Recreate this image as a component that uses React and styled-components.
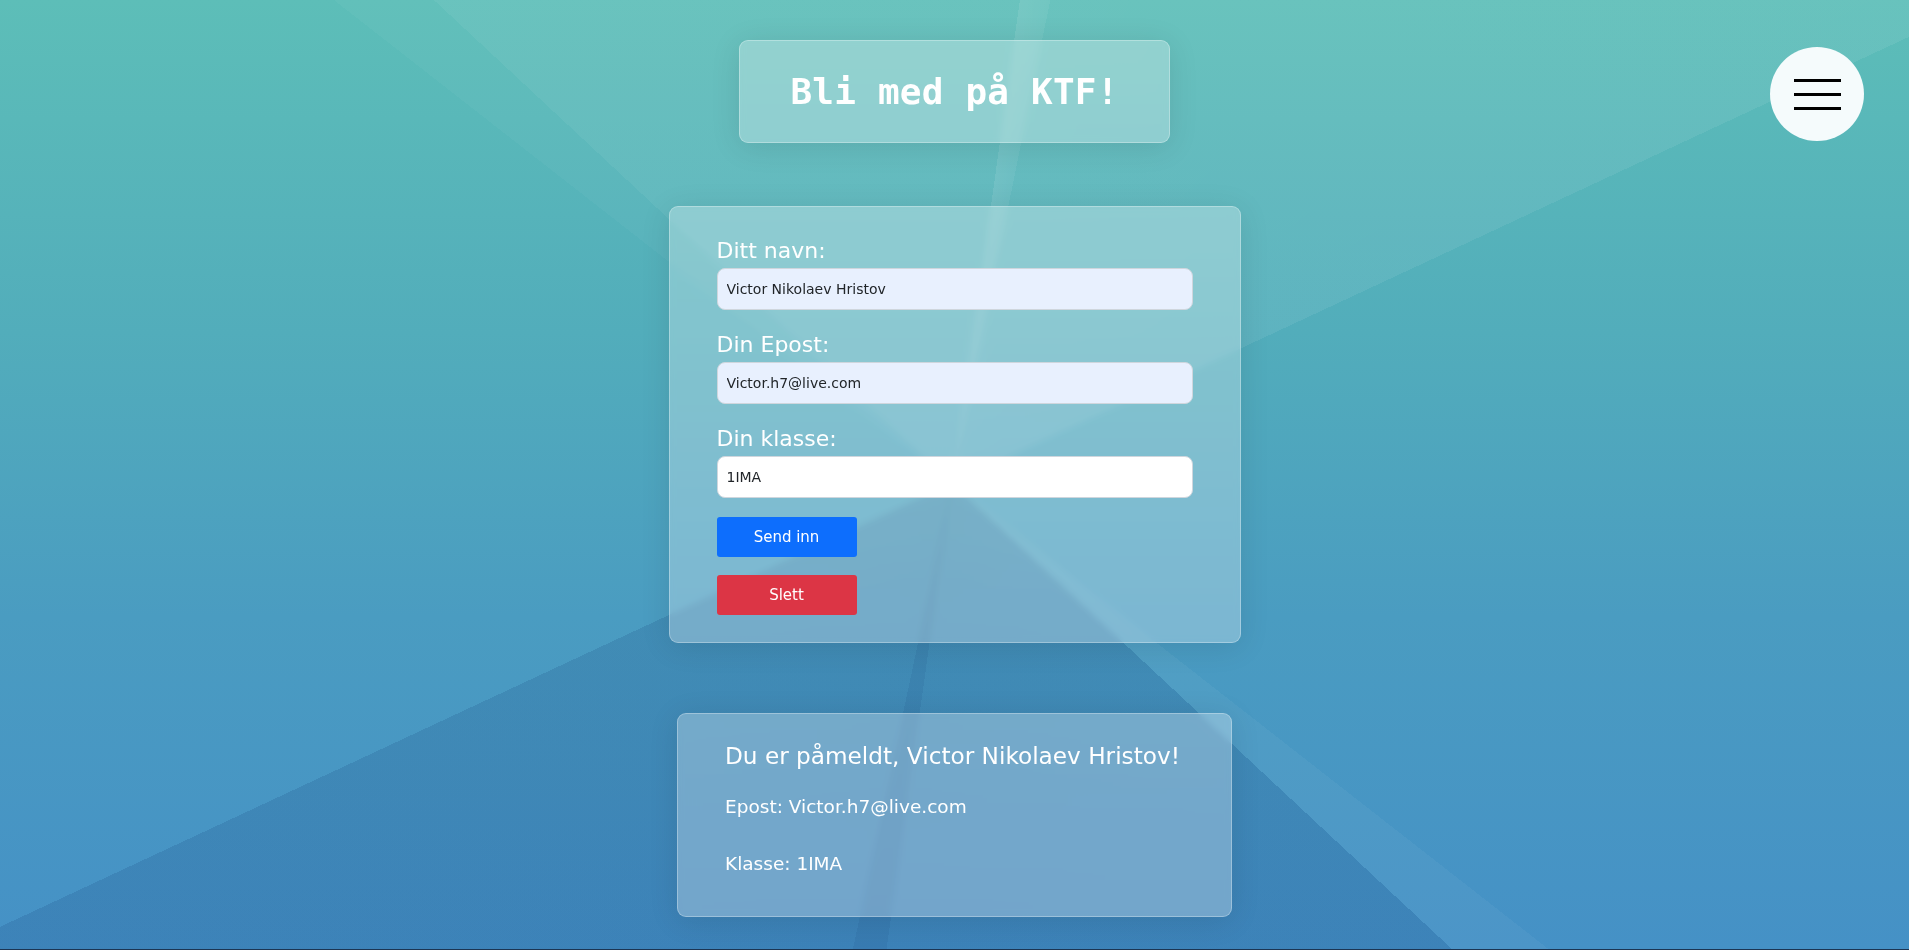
import React from "react";
import styled, { createGlobalStyle } from "styled-components";

const GlobalStyle = createGlobalStyle`
  html, body {
    margin: 0;
    padding: 0;
    background: #1c3553;
  }
  body {
    font-family: "DejaVu Sans", "Liberation Sans", sans-serif;
    overflow: hidden;
  }
  * { box-sizing: border-box; }
`;

const Page = styled.div`
  position: relative;
  min-height: 949px;
  display: flex;
  flex-direction: column;
  align-items: center;
  padding-top: 40px;
  background:
    conic-gradient(
      from 0deg at 952px 483px,
      rgba(255, 255, 255, 0.08) 0deg,
      rgba(255, 255, 255, 0.08) 8deg,
      rgba(255, 255, 255, 0.16) 8deg,
      rgba(255, 255, 255, 0.13) 11.5deg,
      rgba(255, 255, 255, 0.08) 11.5deg,
      rgba(255, 255, 255, 0.07) 65deg,
      rgba(255, 255, 255, 0) 65deg,
      rgba(255, 255, 255, 0) 128deg,
      rgba(255, 255, 255, 0.04) 128deg,
      rgba(255, 255, 255, 0.04) 133deg,
      rgba(10, 45, 105, 0.14) 133deg,
      rgba(10, 45, 105, 0.15) 188deg,
      rgba(10, 45, 105, 0.22) 188deg,
      rgba(10, 45, 105, 0.22) 192deg,
      rgba(10, 45, 105, 0.15) 192deg,
      rgba(10, 45, 105, 0.14) 245deg,
      rgba(255, 255, 255, 0) 245deg,
      rgba(255, 255, 255, 0) 308deg,
      rgba(255, 255, 255, 0.03) 308deg,
      rgba(255, 255, 255, 0.03) 313deg,
      rgba(255, 255, 255, 0.08) 313deg,
      rgba(255, 255, 255, 0.08) 360deg
    ),
    linear-gradient(180deg, #5dbeb8 0%, #52adbb 35%, #4a9cc1 65%, #4591c6 100%);
`;

const Glass = styled.div`
  background: rgba(255, 255, 255, 0.28);
  border: 1px solid rgba(255, 255, 255, 0.3);
  border-radius: 9px;
  box-shadow: 0 4px 30px rgba(0, 0, 0, 0.1);
  backdrop-filter: blur(3px);
`;

const TitleBox = styled(Glass)`
  width: 431px;
  height: 103px;
  display: flex;
  align-items: center;
  justify-content: center;
`;

const Title = styled.h1`
  margin: 0;
  font-family: "DejaVu Sans Mono", "Liberation Mono", monospace;
  font-size: 36px;
  font-weight: bold;
  color: #ffffff;
  letter-spacing: 0.2px;
`;

const FormCard = styled(Glass)`
  margin-top: 63px;
  width: 572px;
  padding: 30px 47px 27px;
  display: flex;
  flex-direction: column;
`;

const Label = styled.label`
  display: block;
  font-size: 22px;
  line-height: 27px;
  color: #ffffff;
  margin-bottom: 4px;
`;

const Input = styled.input`
  display: block;
  width: 100%;
  height: 42px;
  padding: 0 9px;
  margin: 0 0 21px;
  border: 1px solid #cfd6dd;
  border-radius: 8px;
  background: ${(p) => (p.$filled ? "#e8f0fe" : "#ffffff")};
  font-family: "DejaVu Sans", sans-serif;
  font-size: 14px;
  color: #212529;
  outline: none;
`;

const Buttons = styled.div`
  display: flex;
  flex-direction: column;
  align-items: flex-start;
  gap: 18px;
  margin-top: -2px;
`;

const Button = styled.button`
  width: 140px;
  height: 40px;
  border: none;
  border-radius: 3px;
  background: ${(p) => (p.$variant === "danger" ? "#dc3545" : "#0d6efd")};
  color: #ffffff;
  font-family: "DejaVu Sans", sans-serif;
  font-size: 15px;
  cursor: pointer;
`;

const ResultCard = styled(Glass)`
  margin-top: 70px;
  width: 555px;
  padding: 28px 47px 41px;
  color: #ffffff;
`;

const ResultHeading = styled.h3`
  margin: 0 0 26px;
  font-size: 23.2px;
  line-height: 28px;
  font-weight: normal;
  white-space: nowrap;
`;

const ResultLine = styled.p`
  margin: 0 0 ${(p) => p.$gap || 0}px;
  font-size: 18.5px;
  line-height: 22px;
`;

const MenuButton = styled.button`
  position: absolute;
  top: 47px;
  right: 45px;
  width: 94px;
  height: 94px;
  border-radius: 50%;
  border: none;
  background: #f5fbfc;
  display: flex;
  flex-direction: column;
  align-items: center;
  justify-content: center;
  gap: 11px;
  padding: 0;
  cursor: pointer;
`;

const Bar = styled.span`
  display: block;
  width: 47px;
  height: 3px;
  background: #000000;
`;

export default function App() {
  return (
    <>
      <GlobalStyle />
      <Page>
        <TitleBox>
          <Title>Bli med på KTF!</Title>
        </TitleBox>

        <FormCard as="form" onSubmit={(e) => e.preventDefault()}>
          <Label htmlFor="navn">Ditt navn:</Label>
          <Input id="navn" $filled defaultValue="Victor Nikolaev Hristov" />
          <Label htmlFor="epost">Din Epost:</Label>
          <Input id="epost" $filled defaultValue="Victor.h7@live.com" />
          <Label htmlFor="klasse">Din klasse:</Label>
          <Input id="klasse" defaultValue="1IMA" />
          <Buttons>
            <Button type="submit">Send inn</Button>
            <Button type="button" $variant="danger">Slett</Button>
          </Buttons>
        </FormCard>

        <ResultCard>
          <ResultHeading>Du er påmeldt, Victor Nikolaev Hristov!</ResultHeading>
          <ResultLine $gap={35}>Epost: Victor.h7@live.com</ResultLine>
          <ResultLine>Klasse: 1IMA</ResultLine>
        </ResultCard>

        <MenuButton aria-label="Meny">
          <Bar />
          <Bar />
          <Bar />
        </MenuButton>
      </Page>
    </>
  );
}
